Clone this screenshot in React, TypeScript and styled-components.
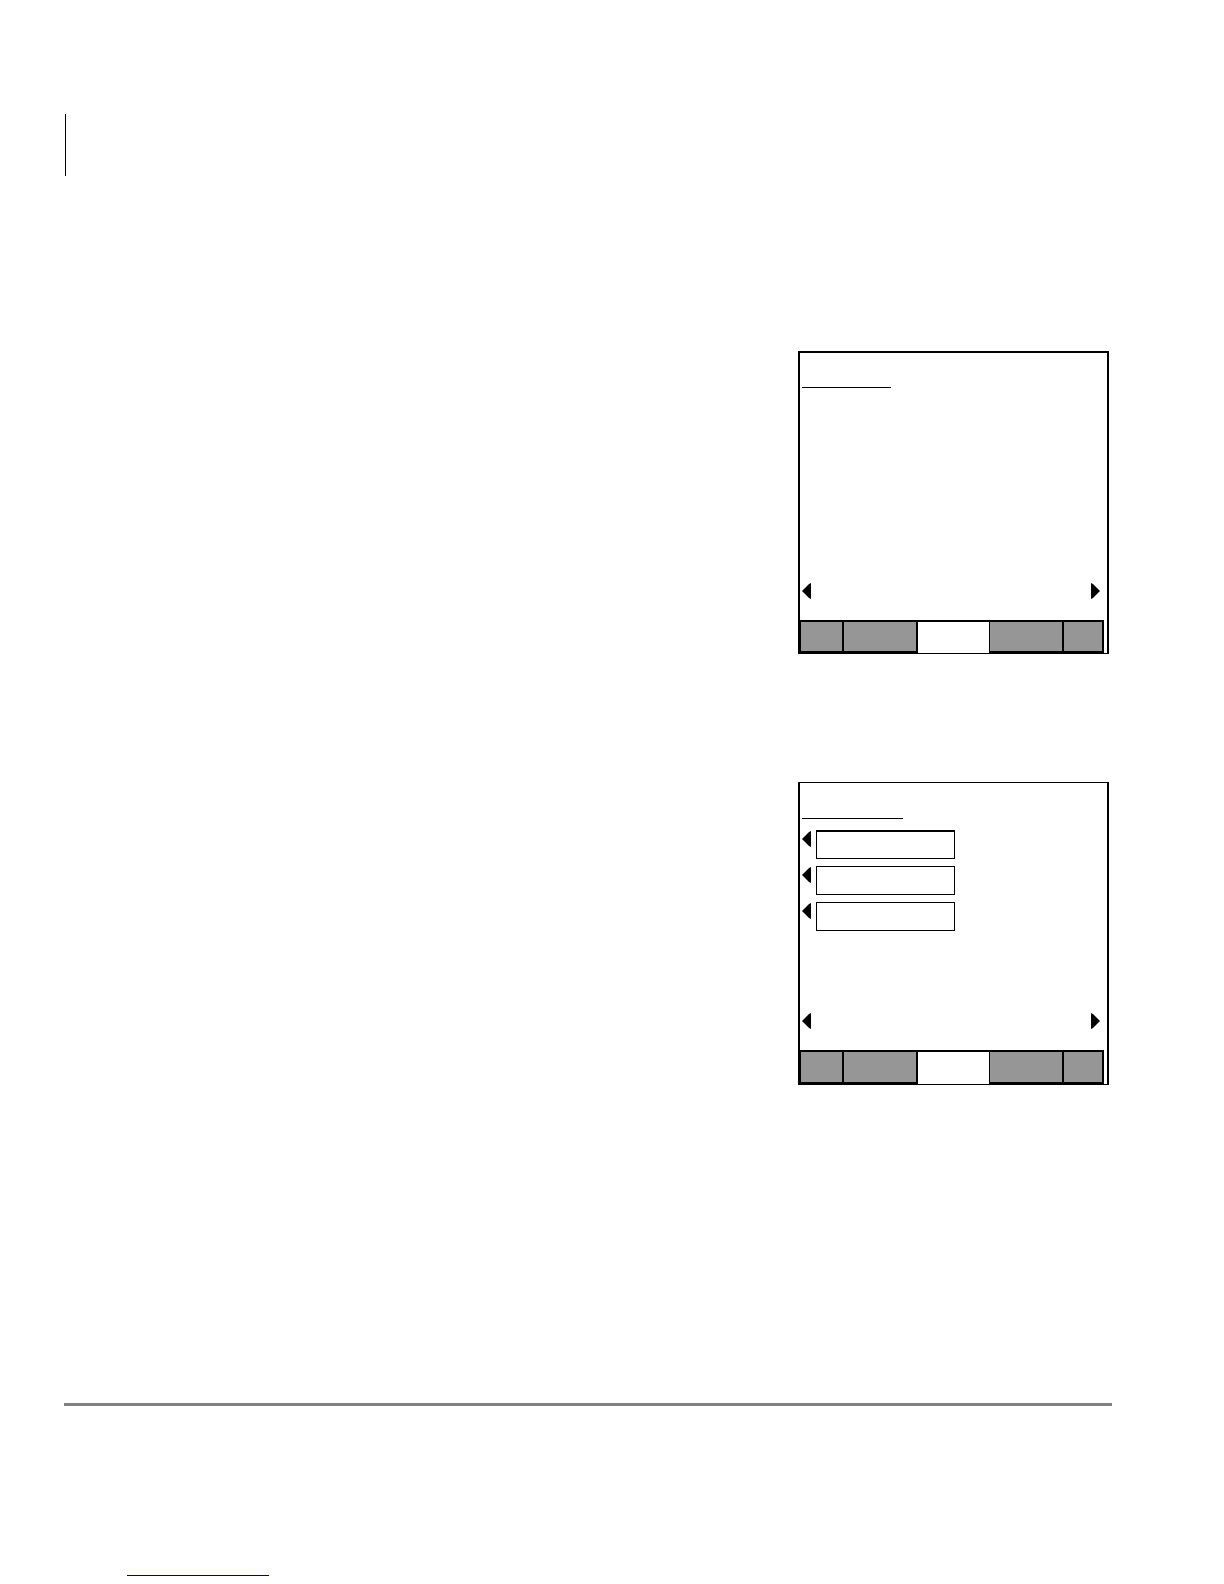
import React from "react";
import styled, { createGlobalStyle } from "styled-components";

const GlobalStyle = createGlobalStyle`
  *, *::before, *::after { box-sizing: border-box; }
  body { margin: 0; background: #fff; font-family: "Liberation Sans", Arial, sans-serif; }
  button, input { margin: 0; padding: 0; border: 0; border-radius: 0; background: none; font: inherit; }
`;

const Page = styled.div`
  display: flex;
  flex-direction: column;
  padding: 114px 112px 8px 64px;
`;

const HeaderMark = styled.header`
  height: 62px;
  margin-left: 1px;
  border-left: 1px solid #000;
`;

const Content = styled.main`
  display: flex;
  flex-direction: column;
  align-items: flex-end;
  gap: 128px;
  padding: 175px 3px 318px 0;
`;

const Screen = styled.section<{ $topLine: number }>`
  display: flex;
  flex-direction: column;
  width: 311px;
  height: 303px;
  border: solid #000;
  border-width: ${(p) => p.$topLine}px 2px 1px;
`;

const Title = styled.div<{ $width: number; $gap: number }>`
  width: ${(p) => p.$width}px;
  height: ${(p) => p.$gap}px;
  margin-left: 2px;
  border-bottom: 1px solid #000;
`;

const Options = styled.div`
  display: flex;
  flex: 1;
  flex-direction: column;
  gap: 7px;
  padding: 11px 2px 0;
`;

const OptionRow = styled.div`
  display: flex;
  gap: 5px;
`;

const Field = styled.input<{ $topLine: number }>`
  width: 139px;
  height: 29px;
  && {
    border: solid #000;
    border-width: ${(p) => p.$topLine}px 1px 1px;
  }
`;

const KeyButton = styled.button`
  display: block;
  width: 9px;
  height: 18px;
  svg { display: block; }
`;

const Navigation = styled.div`
  display: flex;
  justify-content: space-between;
  padding: 0 7px 20px 2px;
`;

const Tabs = styled.nav<{ $height: number }>`
  display: grid;
  grid-template-columns: 44fr 74fr 71fr 75fr 40fr;
  height: ${(p) => p.$height}px;
  margin-right: 3px;
`;

const Tab = styled.button<{ $active?: boolean; $left?: boolean }>`
  && {
    background: ${(p) => (p.$active ? "#fff" : "#969696")};
    border: solid #000;
    border-width: ${(p) =>
      p.$active ? "2px 0 0" : p.$left ? "2px 2px 2px 1px" : "2px 2px 2px 0"};
  }
`;

const FooterRule = styled.hr`
  width: 100%;
  height: 3px;
  margin: 0;
  border: 0;
  background: #808080;
`;

const Footer = styled.footer`
  padding: 150px 0 0 63px;
`;

const FooterLink = styled.a`
  display: block;
  width: 142px;
  height: 20px;
  border-bottom: 1px solid #000080;
`;

function Arrow({ direction, label }: { direction: "left" | "right"; label: string }) {
  return (
    <KeyButton type="button" aria-label={label}>
      <svg width="9" height="18" viewBox="0 0 9 18" aria-hidden="true">
        <path d={direction === "left" ? "M9 1V17L7 16L0 9L7 2Z" : "M0 1V17L2 16L9 9L2 2Z"} />
      </svg>
    </KeyButton>
  );
}

function Display({
  name,
  titleWidth,
  topLine,
  tabHeight,
  options = [],
}: {
  name: string;
  titleWidth: number;
  topLine: number;
  tabHeight: number;
  options?: string[];
}) {
  return (
    <Screen $topLine={topLine} aria-label={name}>
      <Title $width={titleWidth} $gap={37 - topLine} />
      <Options>
        {options.map((option, i) => (
          <OptionRow key={option}>
            <Arrow direction="left" label={`Select ${option}`} />
            <Field aria-label={option} $topLine={i === 0 ? 2 : 1} />
          </OptionRow>
        ))}
      </Options>
      <Navigation>
        <Arrow direction="left" label="Previous" />
        <Arrow direction="right" label="Next" />
      </Navigation>
      <Tabs $height={tabHeight} aria-label={`${name} tabs`}>
        <Tab type="button" aria-label="Tab 1" $left />
        <Tab type="button" aria-label="Tab 2" />
        <Tab type="button" aria-label="Tab 3" $active />
        <Tab type="button" aria-label="Tab 4" $left />
        <Tab type="button" aria-label="Tab 5" />
      </Tabs>
    </Screen>
  );
}

export default function App() {
  return (
    <>
      <GlobalStyle />
      <Page>
        <HeaderMark />
        <Content>
          <Display name="Screen 1" titleWidth={89} topLine={2} tabHeight={33} />
          <Display
            name="Screen 2"
            titleWidth={101}
            topLine={1}
            tabHeight={34}
            options={["Option 1", "Option 2", "Option 3"]}
          />
        </Content>
        <FooterRule />
        <Footer>
          <FooterLink href="#" aria-label="Website" />
        </Footer>
      </Page>
    </>
  );
}
